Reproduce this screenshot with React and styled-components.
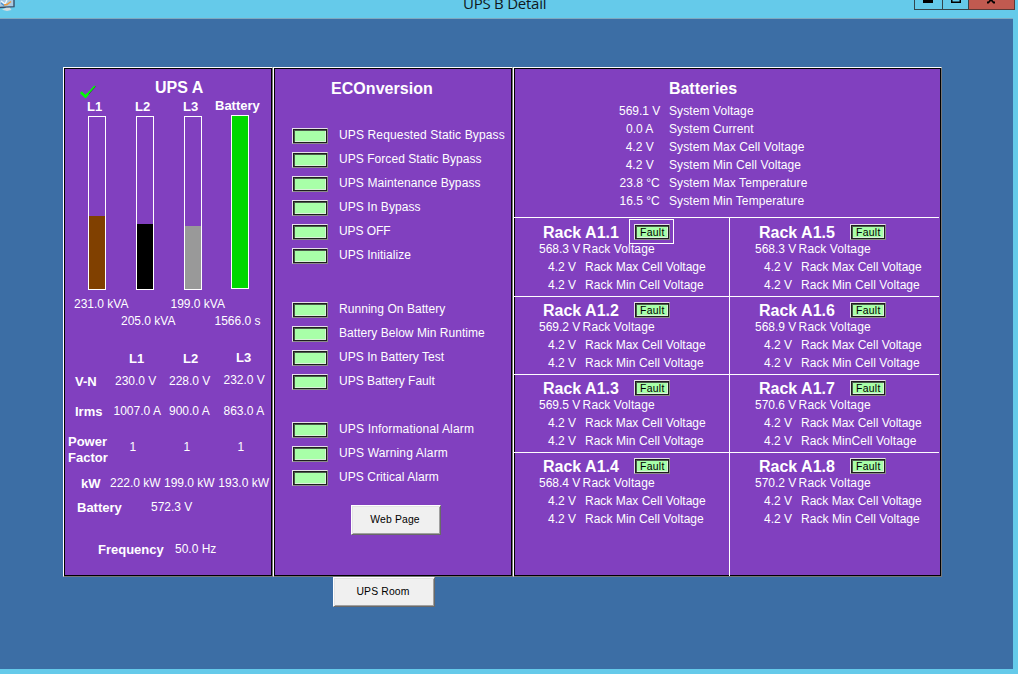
import React from "react";
import styled, { createGlobalStyle } from "styled-components";

const GlobalStyle = createGlobalStyle`
  html, body { margin: 0; padding: 0; }
  body {
    background: #65caea;
    font-family: "Liberation Sans", Arial, sans-serif;
    font-size: 12px;
    overflow: hidden;
  }
  * { box-sizing: border-box; }
`;

const Window = styled.div`
  width: 1018px;
  height: 674px;
  background: #65caea;
  color: #fff;
  display: flex;
  flex-direction: column;
  overflow: hidden;
`;

const TitleBar = styled.header`
  height: 19px;
  flex: none;
  display: flex;
  align-items: flex-start;
  border-bottom: 1px solid #7fa9c0;
  width: 1013px;
`;

const AppIcon = styled.svg`
  display: block;
  flex: none;
  width: 16px;
  height: 12px;
`;

const WindowTitle = styled.h1`
  margin: -7px 0 0 447px;
  width: 451px;
  flex: none;
  font: 400 15px/20px "Open Sans", "Noto Sans", sans-serif;
  letter-spacing: -0.25px;
  color: #10181c;
  white-space: nowrap;
`;

const WindowControls = styled.div`
  display: flex;
  flex: none;
  height: 10px;
`;

const ControlButton = styled.div`
  width: ${(p) => p.$width}px;
  height: 10px;
  border: solid ${(p) => (p.$close ? "#5c3936" : "#33454c")};
  border-width: 0 1px 1px ${(p) => (p.$first ? 1 : 0)}px;
  background: ${(p) => (p.$close ? "#c15a50" : "#65caea")};
  flex: none;
`;

const Glyph = styled.svg`
  display: block;
  height: 4px;
  width: 12px;
  margin-left: ${(p) => p.$left}px;
`;

const Desktop = styled.main`
  width: 1013px;
  height: 650px;
  flex: none;
  background: #3c6ea5;
  padding: 48px 0 0 63px;
`;

const Panels = styled.div`
  display: flex;
  height: 510px;
`;

const Panel = styled.section`
  width: ${(p) => p.$width}px;
  height: 510px;
  flex: none;
  background: #8140bf;
  border: 1px solid;
  border-color: #fff #777 #777 #fff;
  box-shadow: inset 0 0 0 1px #000;
`;

const Heading = styled.h2`
  margin: 0;
  font-size: 16px;
  line-height: 17px;
  font-weight: 700;
  white-space: nowrap;
`;

const Value = styled.span`
  display: block;
  line-height: 14px;
  white-space: nowrap;
  letter-spacing: ${(p) => p.$track || 0}px;
  margin-top: ${(p) => p.$drop || 0}px;
`;

const Caption = styled.span`
  display: block;
  font-size: 13px;
  font-weight: 700;
  line-height: ${(p) => p.$leading || 15}px;
  white-space: nowrap;
  margin-top: ${(p) => p.$drop || 0}px;
`;

/* UPS A panel */

const UpsHeader = styled.div`
  display: grid;
  grid-template-columns: 75px 1fr;
  padding: 11px 0 0 16px;
  height: 31px;
`;

const Check = styled.svg`
  display: block;
  width: 17px;
  height: 14px;
  margin-top: 6px;
`;

const MetricRow = styled.div`
  display: grid;
  grid-template-columns: ${(p) => p.$columns};
  align-items: start;
  padding-left: ${(p) => p.$indent}px;
  height: ${(p) => p.$height}px;
`;

const Gauges = styled.div`
  display: flex;
  gap: 30px;
  padding-left: 24px;
  height: 181px;
`;

const Gauge = styled.div`
  width: 18px;
  height: 174px;
  border: 1px solid #fff;
  display: flex;
  align-items: flex-end;
  margin: ${(p) => (p.$raised ? "-1px 0 0 -1px" : "0")};
`;

const GaugeFill = styled.div`
  width: 100%;
  height: ${(p) => p.$level}px;
  background: ${(p) => p.$color};
`;

/* Indicators and buttons */

const Lamp = styled.div`
  position: relative;
  width: 36px;
  height: 16px;
  flex: none;
  border: 1px solid;
  border-color: #e6e0ea #8a8a8a #8a8a8a #e6e0ea;
`;

const LampFace = styled.div`
  height: 14px;
  border: 1px solid #1e1e1e;
  color: #000;
  font-size: 10.4px;
  letter-spacing: 0.3px;
  line-height: 13px;
  background: #a8ffa8;
  box-shadow: inset 1px 1px 0 #4c5a4c, inset -1px -1px 0 #dcf0dc;
  padding-left: 4px;
  white-space: nowrap;
`;

const FocusFrame = styled.div`
  position: absolute;
  left: -6px;
  top: -6px;
  width: 45px;
  height: 25px;
  border: 1px solid #fff;
`;

const EcoHeading = styled(Heading)`
  margin: 12px 0 31px 57px;
  letter-spacing: 0.05px;
`;

const LampGroup = styled.div`
  margin-bottom: ${(p) => p.$after}px;
`;

const LampRow = styled.div`
  display: flex;
  height: 24px;
  gap: 11px;
  padding-left: 18px;
`;

const PushButton = styled.button`
  display: block;
  width: ${(p) => p.$width}px;
  height: 30px;
  margin: 0 0 0 ${(p) => p.$left}px;
  padding: 0 2px 1px 0;
  border: 1px solid;
  border-color: #fff #696969 #696969 #fff;
  box-shadow: inset 1px 1px 0 #e3e3e3, inset -1px -1px 0 #a0a0a0;
  background: #f0f0f0;
  color: #000;
  font: 10.4px/11px "Liberation Sans", Arial, sans-serif;
  letter-spacing: 0.15px;
  text-align: center;
`;

/* Batteries panel */

const SystemBlock = styled.div`
  width: 425px;
  height: 150px;
  padding-top: 12px;
  border-bottom: 1px solid #fff;
`;

const SystemHeading = styled(Heading)`
  margin: 0 0 7px 155px;
  letter-spacing: -0.05px;
`;

const SystemRow = styled.div`
  display: grid;
  grid-template-columns: 60px 1fr;
  padding-left: 96px;
  height: 18px;
`;

const Reading = styled(Value)`
  width: 59.4px;
  text-align: center;
`;

const SystemLabel = styled(Value)`
  margin-left: -1px;
`;

const RackColumns = styled.div`
  display: flex;
  height: 358px;
`;

const RackColumn = styled.div`
  width: ${(p) => p.$width}px;
  border-right: ${(p) => (p.$divided ? "1px solid #fff" : "none")};
`;

const RackCell = styled.article`
  height: 78px;
  padding-top: 5px;
  border-bottom: 1px solid #fff;
  &:first-child { height: 79px; padding-top: 6px; }
  &:last-child { border-bottom: none; }
`;

const RackHeader = styled.div`
  display: grid;
  grid-template-columns: 91px 36px;
  padding-left: 29px;
  height: 18px;
`;

const RackLine = styled.div`
  display: grid;
  grid-template-columns: ${(p) => (p.$lead ? "43.6px" : "37px")} 1fr;
  padding-left: ${(p) => (p.$lead ? 25 : 34)}px;
  height: 18px;
`;

const lampGroups = [
  {
    after: 30,
    items: [
      ["UPS Requested Static Bypass", 0.14],
      ["UPS Forced Static Bypass", 0.05],
      ["UPS Maintenance Bypass", 0.1],
      ["UPS In Bypass", 0.07],
      ["UPS OFF", -0.08],
      ["UPS Initialize", 0.04],
    ],
  },
  {
    after: 24,
    items: [
      ["Running On Battery", 0.05],
      ["Battery Below Min Runtime", 0.04],
      ["UPS In Battery Test", 0.03],
      ["UPS Battery Fault", -0.02],
    ],
  },
  {
    after: 11,
    items: [
      ["UPS Informational Alarm", 0.16],
      ["UPS Warning Alarm", 0.16],
      ["UPS Critical Alarm", 0.06],
    ],
  },
];

const systemReadings = [
  ["569.1 V", "System Voltage"],
  ["0.0 A", "System Current"],
  ["4.2 V", "System Max Cell Voltage"],
  ["4.2 V", "System Min Cell Voltage"],
  ["23.8 °C", "System Max Temperature"],
  ["16.5 °C", "System Min Temperature"],
];

const leftRacks = [
  { name: "Rack A1.1", voltage: "568.3 V", focused: true },
  { name: "Rack A1.2", voltage: "569.2 V" },
  { name: "Rack A1.3", voltage: "569.5 V" },
  { name: "Rack A1.4", voltage: "568.4 V" },
];

const rightRacks = [
  { name: "Rack A1.5", voltage: "568.3 V" },
  { name: "Rack A1.6", voltage: "568.9 V" },
  { name: "Rack A1.7", voltage: "570.6 V", minLabel: "Rack MinCell Voltage" },
  { name: "Rack A1.8", voltage: "570.2 V" },
];

function Rack({ name, voltage, focused, minLabel = "Rack Min Cell Voltage" }) {
  return (
    <RackCell>
      <RackHeader>
        <Heading>{name}</Heading>
        <Lamp>
          <LampFace>Fault</LampFace>
          {focused && <FocusFrame />}
        </Lamp>
      </RackHeader>
      <RackLine $lead>
        <Value>{voltage}</Value>
        <Value $track={0.12}>Rack Voltage</Value>
      </RackLine>
      <RackLine>
        <Value>4.2 V</Value>
        <Value>Rack Max Cell Voltage</Value>
      </RackLine>
      <RackLine>
        <Value>4.2 V</Value>
        <Value $track={0.07}>{minLabel}</Value>
      </RackLine>
    </RackCell>
  );
}

function UpsPanel() {
  return (
    <Panel $width={210}>
      <UpsHeader>
        <Check viewBox="0 0 17 14">
          <path d="M2 7.5 L6 12 L15.5 1.5" fill="none" stroke="#1c5a1c" strokeWidth="1" />
          <path d="M0.8 7.2 L5.5 11.6 L8 8.8" fill="none" stroke="#00ff00" strokeWidth="2.6" />
          <path d="M7 9.6 L14.8 1" fill="none" stroke="#00ff00" strokeWidth="1.5" />
        </Check>
        <Heading>UPS A</Heading>
      </UpsHeader>
      <MetricRow $indent={23} $height={17} $columns="48px 48px 32px auto">
        <Caption>L1</Caption>
        <Caption>L2</Caption>
        <Caption>L3</Caption>
        <Caption $drop={-1}>Battery</Caption>
      </MetricRow>
      <Gauges>
        <Gauge><GaugeFill $level={73} $color="#804000" /></Gauge>
        <Gauge><GaugeFill $level={65} $color="#000" /></Gauge>
        <Gauge><GaugeFill $level={63} $color="#999" /></Gauge>
        <Gauge $raised><GaugeFill $level={172} $color="#00d800" /></Gauge>
      </Gauges>
      <MetricRow $indent={10} $height={54} $columns="47px 49.5px 44px auto">
        <Value>231.0 kVA</Value>
        <Value $drop={17}>205.0 kVA</Value>
        <Value>199.0 kVA</Value>
        <Value $drop={17}>1566.0 s</Value>
      </MetricRow>
      <MetricRow $indent={65} $height={23} $columns="54px 53px auto">
        <Caption>L1</Caption>
        <Caption>L2</Caption>
        <Caption $drop={-1}>L3</Caption>
      </MetricRow>
      <MetricRow $indent={11} $height={30} $columns="40px 54px 54.5px auto">
        <Caption>V-N</Caption>
        <Value>230.0 V</Value>
        <Value>228.0 V</Value>
        <Value $drop={-1}>232.0 V</Value>
      </MetricRow>
      <MetricRow $indent={11} $height={30} $columns="38.5px 55.5px 54.5px auto">
        <Caption>Irms</Caption>
        <Value>1007.0 A</Value>
        <Value>900.0 A</Value>
        <Value>863.0 A</Value>
      </MetricRow>
      <MetricRow $indent={4} $height={42} $columns="61.5px 54px 54px auto">
        <Caption $leading={16}>Power<br />Factor</Caption>
        <Value $drop={6}>1</Value>
        <Value $drop={6}>1</Value>
        <Value $drop={6}>1</Value>
      </MetricRow>
      <MetricRow $indent={17} $height={24} $columns="29px 54px 54.3px auto">
        <Caption>kW</Caption>
        <Value>222.0 kW</Value>
        <Value>199.0 kW</Value>
        <Value>193.0 kW</Value>
      </MetricRow>
      <MetricRow $indent={13} $height={42} $columns="74px auto">
        <Caption>Battery</Caption>
        <Value>572.3 V</Value>
      </MetricRow>
      <MetricRow $indent={34} $height={20} $columns="77px auto">
        <Caption>Frequency</Caption>
        <Value>50.0 Hz</Value>
      </MetricRow>
    </Panel>
  );
}

function EcoPanel() {
  return (
    <Panel $width={240}>
      <EcoHeading>ECOnversion</EcoHeading>
      {lampGroups.map((group) => (
        <LampGroup key={group.after} $after={group.after}>
          {group.items.map(([label, track]) => (
            <LampRow key={label}>
              <Lamp><LampFace /></Lamp>
              <Value $track={track}>{label}</Value>
            </LampRow>
          ))}
        </LampGroup>
      ))}
      <PushButton $width={90} $left={77}>Web Page</PushButton>
    </Panel>
  );
}

function BatteriesPanel() {
  return (
    <Panel $width={429}>
      <SystemBlock>
        <SystemHeading>Batteries</SystemHeading>
        {systemReadings.map(([value, label]) => (
          <SystemRow key={label}>
            <Reading>{value}</Reading>
            <SystemLabel $track={0.09}>{label}</SystemLabel>
          </SystemRow>
        ))}
      </SystemBlock>
      <RackColumns>
        <RackColumn $width={216} $divided>
          {leftRacks.map((rack) => <Rack key={rack.name} {...rack} />)}
        </RackColumn>
        <RackColumn $width={209}>
          {rightRacks.map((rack) => <Rack key={rack.name} {...rack} />)}
        </RackColumn>
      </RackColumns>
    </Panel>
  );
}

export default function App() {
  return (
    <>
      <GlobalStyle />
      <Window>
        <TitleBar>
          <AppIcon viewBox="0 0 16 12">
            <path d="M0 0H14V7L0 8Z" fill="#a9c9e2" />
            <path d="M0 7.5L14 6.6V0" fill="none" stroke="#35506a" strokeWidth="1.4" />
            <path d="M1 1L5 4L7 0" fill="none" stroke="#f4f8fb" strokeWidth="1.4" />
            <path d="M4 5L7 4.5L11 1.5" fill="none" stroke="#ef9a3d" strokeWidth="1.5" />
            <path d="M1 3L4 5.5" stroke="#4a8fd0" strokeWidth="1.2" />
            <path d="M6 7.7H10L11.5 10L7 11L2 9.8Z" fill="#d5dce0" />
          </AppIcon>
          <WindowTitle>UPS B Detail</WindowTitle>
          <WindowControls>
            <ControlButton $width={29} $first>
              <Glyph $left={8} viewBox="0 0 12 4"><path d="M0 0H10V3H0Z" fill="#000" /></Glyph>
            </ControlButton>
            <ControlButton $width={26}>
              <Glyph $left={8} viewBox="0 0 12 4"><path d="M0 0H1.5V1.5H8.5V0H10V3H0Z" fill="#000" /></Glyph>
            </ControlButton>
            <ControlButton $width={46} $close>
              <Glyph $left={17} viewBox="0 0 12 4">
                <path d="M2 3L4.8 0H5.2L8 3M1 2.5H3M7 2.5H9" fill="none" stroke="#000" strokeWidth="1.8" />
              </Glyph>
            </ControlButton>
          </WindowControls>
        </TitleBar>
        <Desktop>
          <Panels>
            <UpsPanel />
            <EcoPanel />
            <BatteriesPanel />
          </Panels>
          <PushButton $width={102} $left={270}>UPS Room</PushButton>
        </Desktop>
      </Window>
    </>
  );
}
